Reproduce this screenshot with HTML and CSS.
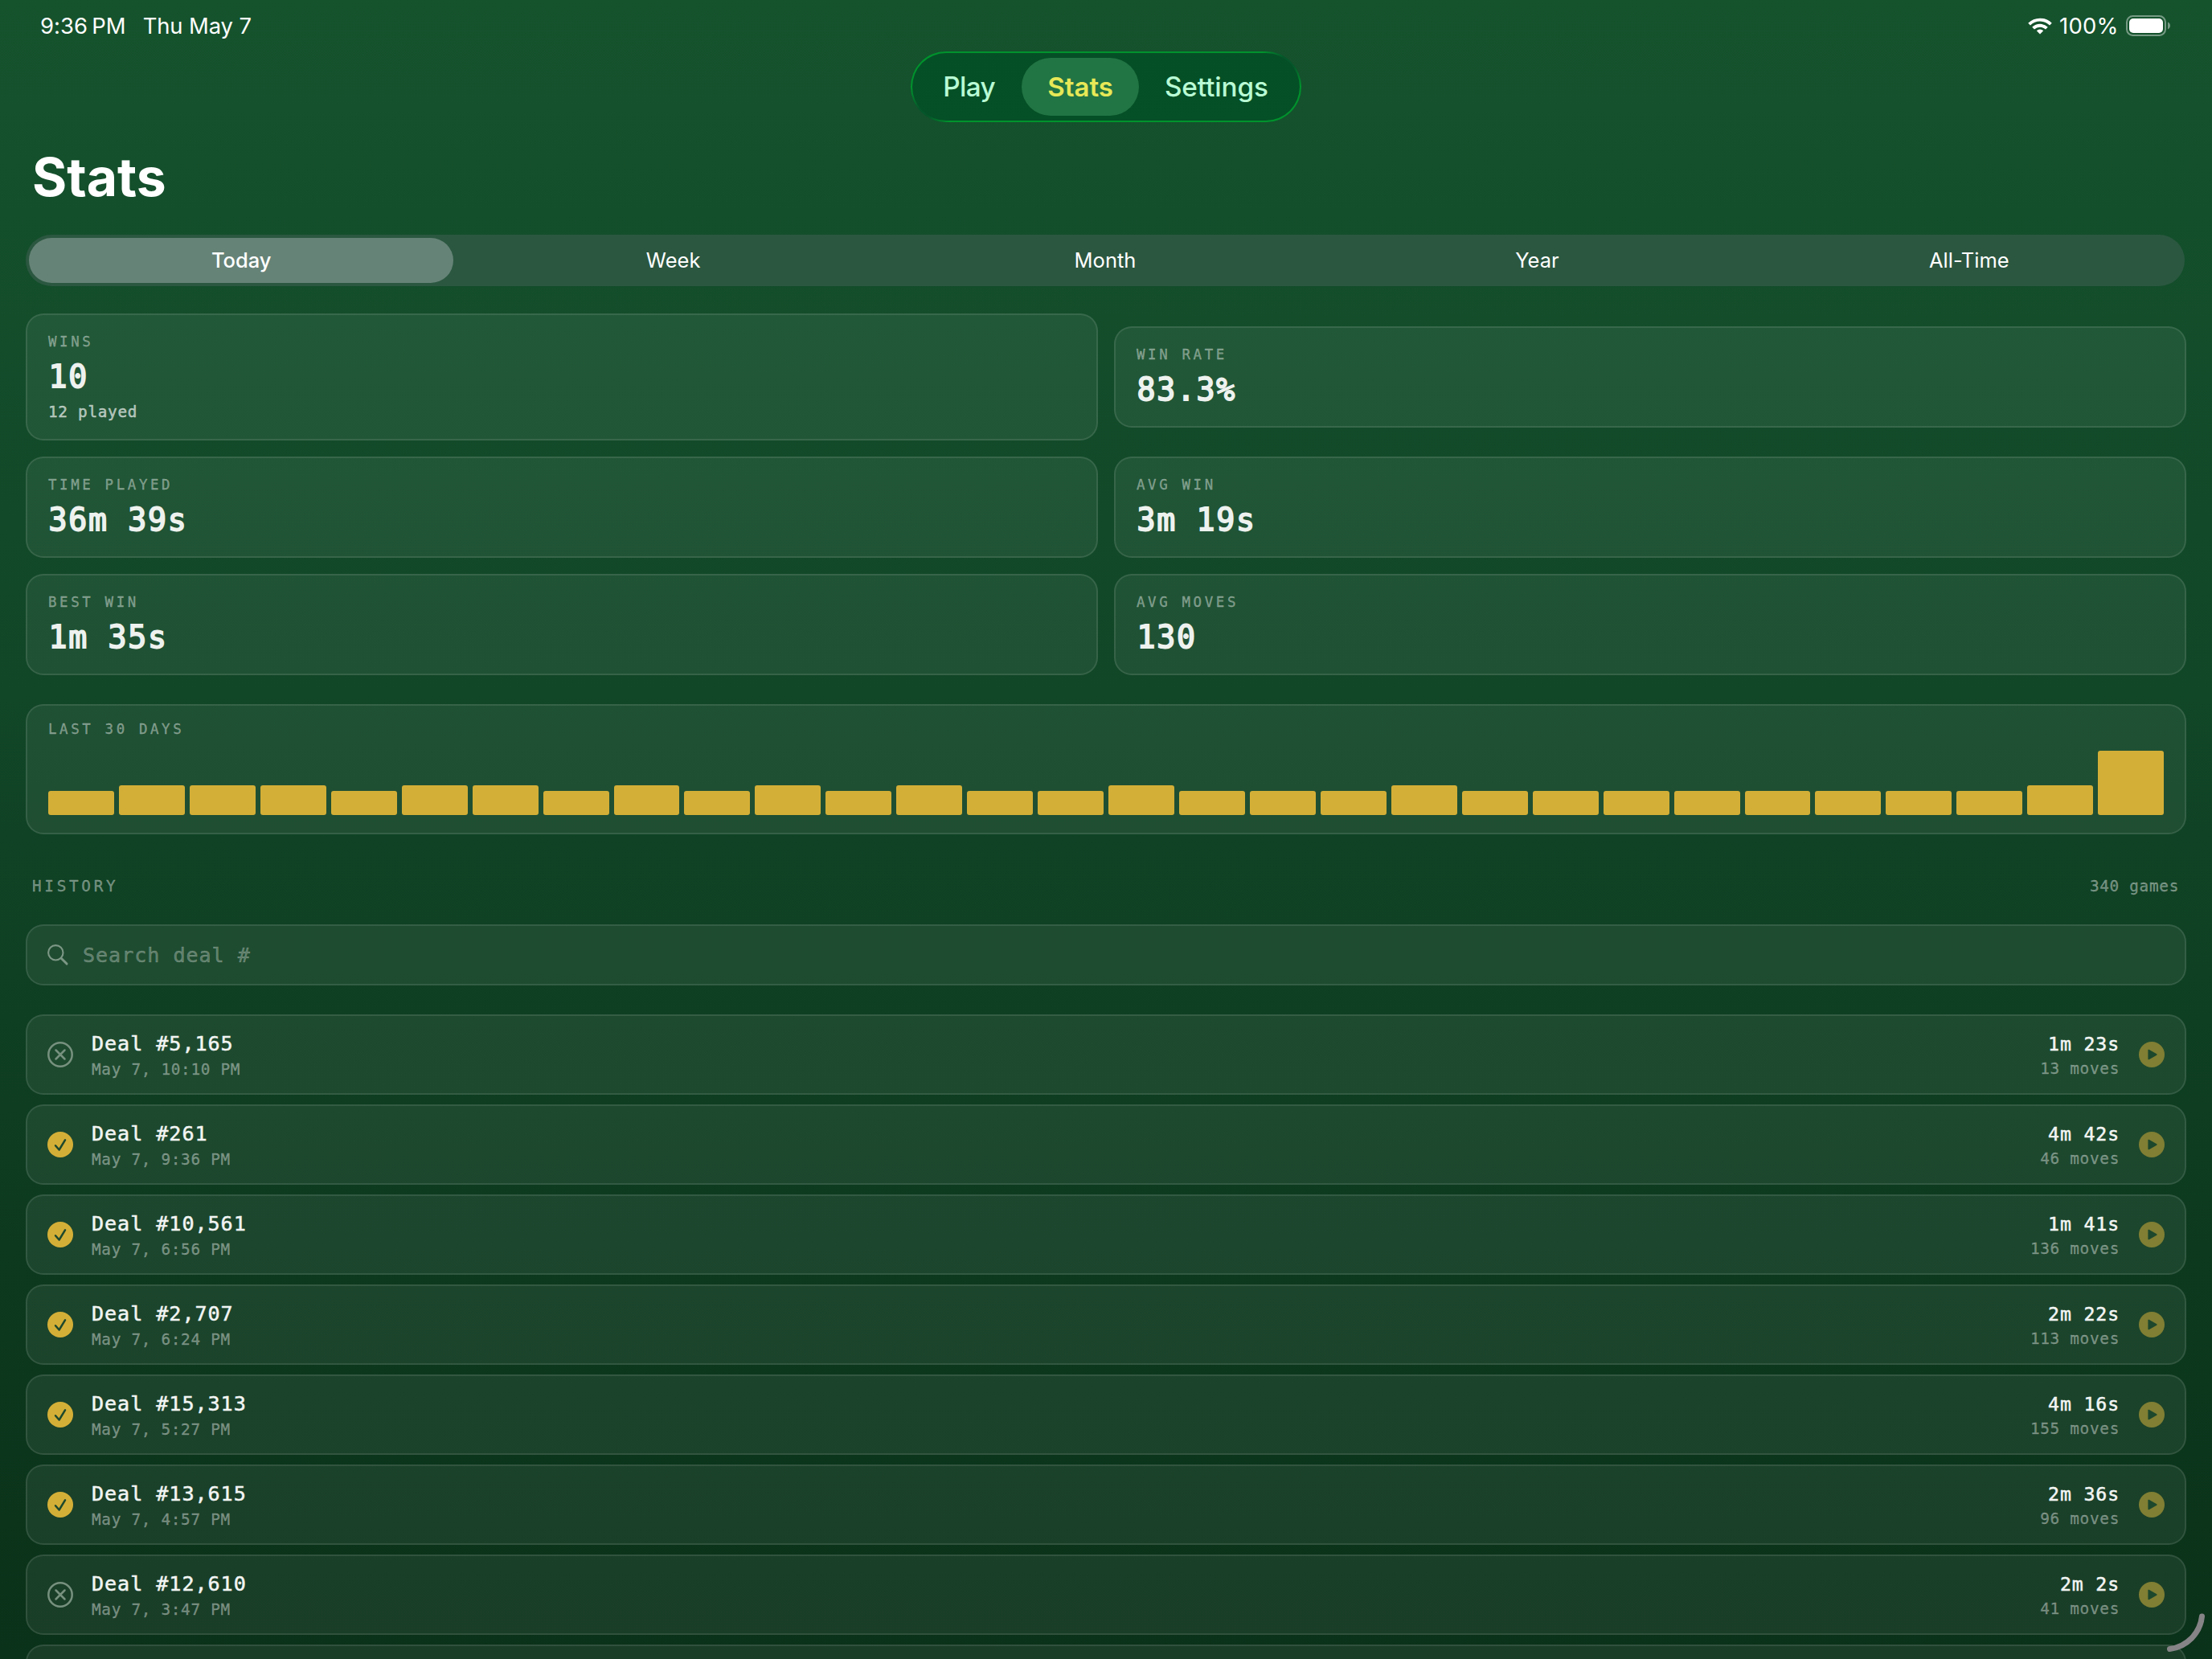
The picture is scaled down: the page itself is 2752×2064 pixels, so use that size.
FILE: index.html
```html
<!DOCTYPE html>
<html lang="en">
<head>
<meta charset="utf-8">
<title>Stats</title>
<link rel="stylesheet" href="styles.css">
</head>
<body>
<svg class="defs" width="0" height="0" aria-hidden="true">
  <symbol id="i-check" viewBox="0 0 32 32"><circle cx="16" cy="16" r="16" fill="#d4af37"/><path d="M10 17.200l4.600 5.300 7.400-12.200" fill="none" stroke="#1d482d" stroke-width="2.500" stroke-linecap="round" stroke-linejoin="round"/></symbol>
  <symbol id="i-cross" viewBox="0 0 32 32"><g fill="none" stroke="#77917f" stroke-width="2.500" stroke-linecap="round"><circle cx="16" cy="16" r="14.700"/><path d="M10.500 10.500l11 11M21.500 10.500l-11 11"/></g></symbol>
  <symbol id="i-play" viewBox="0 0 32 32"><circle cx="16" cy="16" r="16" fill="#807f33"/><path d="M12.200 10.500v11l9.600-5.500z" fill="#1d482d" stroke="#1d482d" stroke-width="1.600" stroke-linejoin="round"/></symbol>
</svg>
<div class="screen">
  <header class="status">
    <div class="status-left"><span class="clock">9:36<i></i>PM</span><span class="date">Thu May 7</span></div>
    <div class="status-right">
      <svg class="wifi" viewBox="0 0 30 21"><g fill="none" stroke="#fff" stroke-width="3.900"><path d="M1.600 8.200a19 19 0 0 1 26.800 0"/><path d="M6.600 13.200a12 12 0 0 1 16.800 0"/></g><path d="M15 20.600l-4.200-4.300a6 6 0 0 1 8.400 0z" fill="#fff"/></svg>
      <span class="percent">100%</span>
      <svg class="battery" viewBox="0 0 56 26"><rect x="1" y="1" width="48" height="24" rx="7.500" fill="none" stroke="#fff" stroke-opacity=".42" stroke-width="2"/><rect x="4" y="4" width="42" height="18" rx="5" fill="#fff"/><path d="M52 8.600c4 1.600 4 7.200 0 8.800z" fill="#fff" fill-opacity=".42"/></svg>
    </div>
  </header>

  <nav class="tabs">
    <a class="tab play">Play</a><a class="tab active">Stats</a><a class="tab settings">Settings</a>
  </nav>

  <h1>Stats</h1>

  <div class="segments">
    <span class="segment on">Today</span><span class="segment">Week</span><span class="segment">Month</span><span class="segment">Year</span><span class="segment">All-Time</span>
  </div>

  <section class="grid">
    <div class="card stat tall"><div class="label">WINS</div><div class="value">10</div><div class="sub">12 played</div></div>
    <div class="card stat"><div class="label">WIN RATE</div><div class="value">83.3%</div></div>
    <div class="card stat"><div class="label">TIME PLAYED</div><div class="value">36m 39s</div></div>
    <div class="card stat"><div class="label">AVG WIN</div><div class="value">3m 19s</div></div>
    <div class="card stat"><div class="label">BEST WIN</div><div class="value">1m 35s</div></div>
    <div class="card stat"><div class="label">AVG MOVES</div><div class="value">130</div></div>
  </section>

  <section class="card chart">
    <div class="label">LAST 30 DAYS</div>
    <div class="bars">
      <b></b><b class="two"></b><b class="two"></b><b class="two"></b><b></b><b class="two"></b><b class="two"></b><b></b><b class="two"></b><b></b>
      <b class="two"></b><b></b><b class="two"></b><b></b><b></b><b class="two"></b><b></b><b></b><b></b><b class="two"></b>
      <b></b><b></b><b></b><b></b><b></b><b></b><b></b><b></b><b class="two"></b><b class="full"></b>
    </div>
  </section>

  <div class="history-head"><span class="history-title">HISTORY</span><span class="count">340 games</span></div>

  <div class="card search">
    <svg class="lens" viewBox="0 0 26 26"><g fill="none" stroke="#7c9785" stroke-linecap="round"><circle cx="10.300" cy="10.300" r="9.200" stroke-width="2.100"/><path d="M17.200 17.200l6.800 6.900" stroke-width="2.900"/></g></svg>
    <span class="placeholder">Search deal #</span>
  </div>

  <section class="rows">
    <div class="card row"><svg class="icon"><use href="#i-cross"/></svg><div class="deal"><div class="name">Deal #5,165</div><div class="when">May 7, 10:10 PM</div></div><div class="result"><div class="time">1m 23s</div><div class="moves">13 moves</div></div><svg class="icon"><use href="#i-play"/></svg></div>
    <div class="card row"><svg class="icon"><use href="#i-check"/></svg><div class="deal"><div class="name">Deal #261</div><div class="when">May 7, 9:36 PM</div></div><div class="result"><div class="time">4m 42s</div><div class="moves">46 moves</div></div><svg class="icon"><use href="#i-play"/></svg></div>
    <div class="card row"><svg class="icon"><use href="#i-check"/></svg><div class="deal"><div class="name">Deal #10,561</div><div class="when">May 7, 6:56 PM</div></div><div class="result"><div class="time">1m 41s</div><div class="moves">136 moves</div></div><svg class="icon"><use href="#i-play"/></svg></div>
    <div class="card row"><svg class="icon"><use href="#i-check"/></svg><div class="deal"><div class="name">Deal #2,707</div><div class="when">May 7, 6:24 PM</div></div><div class="result"><div class="time">2m 22s</div><div class="moves">113 moves</div></div><svg class="icon"><use href="#i-play"/></svg></div>
    <div class="card row"><svg class="icon"><use href="#i-check"/></svg><div class="deal"><div class="name">Deal #15,313</div><div class="when">May 7, 5:27 PM</div></div><div class="result"><div class="time">4m 16s</div><div class="moves">155 moves</div></div><svg class="icon"><use href="#i-play"/></svg></div>
    <div class="card row"><svg class="icon"><use href="#i-check"/></svg><div class="deal"><div class="name">Deal #13,615</div><div class="when">May 7, 4:57 PM</div></div><div class="result"><div class="time">2m 36s</div><div class="moves">96 moves</div></div><svg class="icon"><use href="#i-play"/></svg></div>
    <div class="card row"><svg class="icon"><use href="#i-cross"/></svg><div class="deal"><div class="name">Deal #12,610</div><div class="when">May 7, 3:47 PM</div></div><div class="result"><div class="time">2m 2s</div><div class="moves">41 moves</div></div><svg class="icon"><use href="#i-play"/></svg></div>
    <div class="card row"></div>
  </section>

  <svg class="corner" viewBox="0 0 56 56"><path d="M43.500 7A46 46 0 0 1 3.500 47.500" fill="none" stroke="#868487" stroke-width="7" stroke-linecap="round"/></svg>
</div>
</body>
</html>
```
FILE: styles.css
```css
* { box-sizing: border-box; }

body { margin: 0; background: #0a331a; }

.defs { position: absolute; }

.screen {
  position: relative;
  width: 2752px;
  height: 2064px;
  overflow: hidden;
  padding: 0 32px;
  display: flex;
  flex-direction: column;
  background: linear-gradient(180deg, #15532d 0%, #114627 42%, #0a3119 100%);
  color: #fff;
  font-family: Inter, "Liberation Sans", sans-serif;
}

/* Status bar */
.status {
  flex: none;
  height: 64px;
  padding: 0 19px 0 18px;
  display: flex;
  justify-content: space-between;
  font-size: 27.4px;
  font-weight: 430;
  line-height: 65px;
}
.status-left { display: flex; gap: 21px; }
.clock { letter-spacing: 0.1px; }
.clock i { display: inline-block; width: 5px; }
.date { letter-spacing: -0.1px; }
.status-right { display: flex; align-items: center; }
.wifi { width: 30px; height: 21px; }
.percent { margin-left: 9px; width: 75px; letter-spacing: 0.3px; }
.battery { width: 56px; height: 26px; margin-left: 8px; }

/* Tab switcher */
.tabs {
  flex: none;
  align-self: center;
  width: 486px;
  height: 88px;
  padding: 6px;
  display: flex;
  justify-content: center;
  border: 2px solid transparent;
  border-radius: 44px;
  background:
    linear-gradient(#054f26, #055026) padding-box,
    radial-gradient(circle at 470px 12px, #05562a 8px, transparent 34px) border-box,
    radial-gradient(circle at 16px 76px, #05562a 8px, transparent 34px) border-box,
    linear-gradient(#00932d, #00932d) border-box;
}
.tab {
  line-height: 72px;
  font-size: 33.3px;
  font-weight: 450;
  color: #b9fbd5;
  text-align: center;
}
.tab.play { width: 131px; padding-right: 1px; letter-spacing: -0.6px; }
.tab.settings { width: 195px; padding-right: 1px; letter-spacing: -0.1px; }
.tab.active {
  width: 146px;
  height: 72px;
  border-radius: 36px;
  background: #217444;
  color: #e7e857;
  font-size: 33px;
  font-weight: 600;
}

h1 {
  flex: none;
  margin: 28px 0 32px 8px;
  font-size: 66px;
  font-weight: 700;
  line-height: 80px;
}

/* Period picker */
.segments {
  flex: none;
  width: 2686px;
  height: 64px;
  padding: 4px;
  display: grid;
  grid-template-columns: repeat(5, 1fr);
  column-gap: 9px;
  border-radius: 32px;
  background: #2b5740;
}
.segment {
  border-radius: 28px;
  text-align: center;
  font-size: 25.5px;
  font-weight: 430;
  line-height: 56px;
}
.segment.on { background: #668377; font-weight: 500; }

/* Cards */
.card {
  border: 2px solid rgba(255, 255, 255, 0.1);
  border-radius: 22px;
  background: rgba(255, 255, 255, 0.062);
  font-family: "DejaVu Sans Mono", "Liberation Mono", monospace;
}
.label {
  font-size: 17.4px;
  line-height: 22px;
  letter-spacing: 3.64px;
  color: rgba(255, 255, 255, 0.4);
  -webkit-text-stroke: 0.3px;
}

.grid {
  flex: none;
  margin-top: 34px;
  display: grid;
  grid-template-columns: 1fr 1fr;
  grid-template-rows: 158px 126px 126px;
  gap: 20px;
  align-items: center;
}
.stat { height: 126px; padding: 22px 26px 0; }
.stat.tall { height: 158px; }
.value {
  margin: 9px 0 0 0.5px;
  font-size: 38.2px;
  line-height: 48px;
  letter-spacing: 1.7px;
  color: #eef2ef;
  -webkit-text-stroke: 1.8px;
}
.sub {
  margin-top: 7px;
  font-size: 19.34px;
  line-height: 25px;
  letter-spacing: 0.71px;
  color: rgba(255, 255, 255, 0.6);
  -webkit-text-stroke: 0.5px;
}

.chart { flex: none; margin-top: 36px; height: 162px; padding: 18px 26px 22px; }
.bars { margin-top: 16px; height: 80px; display: flex; align-items: flex-end; gap: 6px; }
.bars b { flex: 1; height: 30px; border-radius: 3px; background: #d4af37; }
.bars .two { height: 37px; }
.bars .full { height: 80px; }

/* History */
.history-head {
  flex: none;
  margin: 52px 9px 35px 8px;
  display: flex;
  justify-content: space-between;
  font-family: "DejaVu Sans Mono", "Liberation Mono", monospace;
  font-size: 19.34px;
  line-height: 25px;
  letter-spacing: 0.71px;
  color: rgba(255, 255, 255, 0.4);
  -webkit-text-stroke: 0.3px;
}
.history-title { letter-spacing: 3.7px; }

.search { flex: none; height: 76px; padding-left: 25px; display: flex; align-items: center; }
.lens { width: 26px; height: 26px; }
.placeholder {
  margin-left: 18px;
  padding-top: 1px;
  font-size: 25.1px;
  line-height: 32px;
  letter-spacing: 0.95px;
  color: rgba(255, 255, 255, 0.28);
  -webkit-text-stroke: 0.5px;
}

.rows { margin-top: 36px; display: flex; flex-direction: column; gap: 12px; }
.row { flex: none; height: 100px; padding: 0 25px; display: flex; align-items: center; }
.icon { flex: none; width: 32px; height: 32px; }
.deal { flex: 1; margin-left: 23px; padding-top: 3px; }
.name {
  font-size: 25.1px;
  line-height: 30px;
  letter-spacing: 0.95px;
  color: #f2f5f3;
  -webkit-text-stroke: 0.5px;
}
.when, .moves {
  margin-top: 4px;
  font-size: 19.34px;
  line-height: 25px;
  letter-spacing: 0.71px;
  color: rgba(255, 255, 255, 0.38);
  -webkit-text-stroke: 0.3px;
}
.result { margin-right: 24px; padding-top: 3px; text-align: right; }
.time {
  font-size: 23.2px;
  line-height: 28px;
  letter-spacing: 0.86px;
  color: #f2f5f3;
  -webkit-text-stroke: 0.5px;
}

/* Pencil corner hint, floats over the list */
.corner { position: absolute; left: 2696px; top: 2004px; width: 56px; height: 56px; }
```
